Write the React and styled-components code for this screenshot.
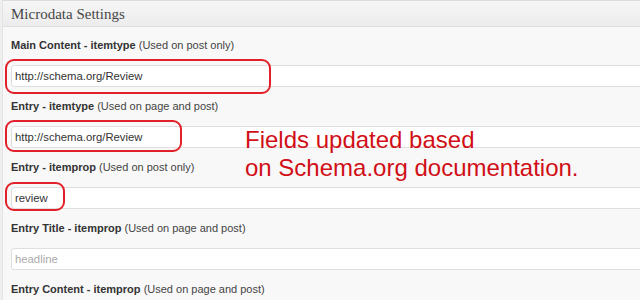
import React from "react";
import styled, { createGlobalStyle } from "styled-components";

const Global = createGlobalStyle`
  html, body { margin: 0; padding: 0; background: #efefef; }
  body { font-family: "Liberation Sans", Arial, sans-serif; }
`;

const Panel = styled.div`
  position: relative;
  width: 640px;
  height: 300px;
  overflow: hidden;
  box-sizing: border-box;
  margin-left: 2px;
  border-top: 1px solid #dcdcdc;
  border-left: 1px solid #e4e4e4;
  background: #f8f8f8;
`;

const Header = styled.div`
  height: 26px;
  box-sizing: border-box;
  padding-left: 8px;
  border-bottom: 1px solid #dedede;
  background: linear-gradient(#f6f6f6, #ececec);
  font-family: "Liberation Serif", "Times New Roman", serif;
  font-size: 15px;
  line-height: 27px;
  color: #464646;
`;

const Body = styled.div`
  padding: 11px 0 0 8px;
  display: flex;
  flex-direction: column;
`;

const Field = styled.div`
  display: flex;
  flex-direction: column;
  gap: 13px;
  margin-bottom: 12px;
`;

const Label = styled.div`
  font-size: 11px;
  line-height: 14px;
  color: #333;
  white-space: nowrap;
  b { font-weight: bold; color: #333; }
  span { color: #444; }
`;

const InputWrap = styled.div`
  position: relative;
  width: 700px;
`;

const Input = styled.input`
  display: block;
  box-sizing: border-box;
  width: 700px;
  height: 22px;
  padding: 0 3px;
  border: 1px solid #dfdfdf;
  border-radius: 3px;
  background: #fff;
  font-family: "Liberation Sans", Arial, sans-serif;
  font-size: 11.3px;
  color: #333;
  outline: none;
  &::placeholder { color: #aaa; }
`;

const Highlight = styled.div`
  position: absolute;
  left: -6px;
  top: ${p => p.$top}px;
  width: ${p => p.$w}px;
  height: ${p => p.$h}px;
  box-sizing: border-box;
  border: 2px solid #e2202a;
  border-radius: 9px;
  pointer-events: none;
`;

const Note = styled.div`
  position: absolute;
  left: 242px;
  top: 125px;
  font-family: "Liberation Sans", Arial, sans-serif;
  font-size: 24px;
  line-height: 28px;
  color: #d10f17;
  white-space: nowrap;
`;

const fields = [
  { bold: "Main Content - itemtype", note: "(Used on post only)", value: "http://schema.org/Review", hl: { top: -6, w: 266, h: 35 } },
  { bold: "Entry - itemtype", note: "(Used on page and post)", value: "http://schema.org/Review", hl: { top: -6, w: 177, h: 32 } },
  { bold: "Entry - itemprop", note: "(Used on post only)", value: "review", hl: { top: -5, w: 60, h: 29 } },
  { bold: "Entry Title - itemprop", note: "(Used on page and post)", placeholder: "headline" },
  { bold: "Entry Content - itemprop", note: "(Used on page and post)", placeholder: "text" },
];

export default function App() {
  return (
    <>
      <Global />
      <Panel>
        <Header>Microdata Settings</Header>
        <Body>
          {fields.map((f, i) => (
            <Field key={i}>
              <Label>
                <b>{f.bold}</b> <span>{f.note}</span>
              </Label>
              <InputWrap>
                <Input readOnly defaultValue={f.value} placeholder={f.placeholder} />
                {f.hl && <Highlight $top={f.hl.top} $w={f.hl.w} $h={f.hl.h} />}
              </InputWrap>
            </Field>
          ))}
        </Body>
        <Note>
          Fields updated based
          <br />
          on Schema.org documentation.
        </Note>
      </Panel>
    </>
  );
}
